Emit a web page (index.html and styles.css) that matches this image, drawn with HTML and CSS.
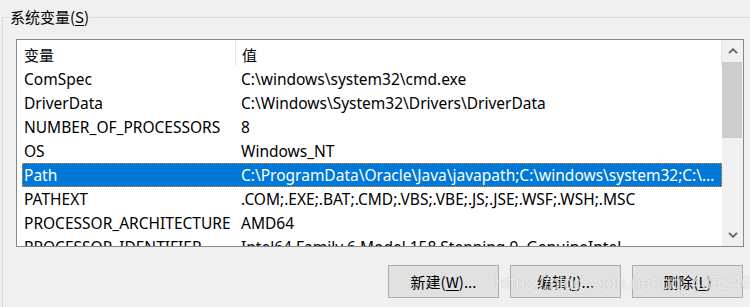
FILE: index.html
```html
<!DOCTYPE html>
<html>
<head>
  <meta charset="utf-8">
  <link rel="stylesheet" href="styles.css">
</head>
<body>
  <fieldset class="group">
    <legend class="group-title">系统变量(<u>S</u>)</legend>

    <div class="listbox">
      <div class="list">
        <div class="list-header">
          <div class="col col-name">变量</div>
          <div class="col col-value">值</div>
        </div>
        <div class="row"><div class="col col-name">ComSpec</div><div class="col col-value">C:\windows\system32\cmd.exe</div></div>
        <div class="row"><div class="col col-name">DriverData</div><div class="col col-value">C:\Windows\System32\Drivers\DriverData</div></div>
        <div class="row"><div class="col col-name">NUMBER_OF_PROCESSORS</div><div class="col col-value">8</div></div>
        <div class="row"><div class="col col-name">OS</div><div class="col col-value">Windows_NT</div></div>
        <div class="row row-selected"><div class="col col-name">Path</div><div class="col col-value">C:\ProgramData\Oracle\Java\javapath;C:\windows\system32;C:\windows;C:\windows\System32\Wbem</div></div>
        <div class="row"><div class="col col-name">PATHEXT</div><div class="col col-value">.COM;.EXE;.BAT;.CMD;.VBS;.VBE;.JS;.JSE;.WSF;.WSH;.MSC</div></div>
        <div class="row"><div class="col col-name">PROCESSOR_ARCHITECTURE</div><div class="col col-value">AMD64</div></div>
        <div class="row"><div class="col col-name">PROCESSOR_IDENTIFIER</div><div class="col col-value">Intel64 Family 6 Model 158 Stepping 9, GenuineIntel</div></div>
      </div>
      <div class="scrollbar">
        <div class="scroll-btn">
          <svg width="10" height="6" viewBox="0 0 10 6"><path d="M1 5.2 L5 1.2 L9 5.2" fill="none" stroke="#606060" stroke-width="1.8"/></svg>
        </div>
        <div class="scroll-track">
          <div class="scroll-thumb"></div>
        </div>
        <div class="scroll-btn">
          <svg width="10" height="6" viewBox="0 0 10 6"><path d="M1 0.8 L5 4.8 L9 0.8" fill="none" stroke="#606060" stroke-width="1.8"/></svg>
        </div>
      </div>
    </div>

    <div class="buttons">
      <button class="btn">新建(<u>W</u>)...</button>
      <button class="btn">编辑(<u>I</u>)...</button>
      <button class="btn">删除(<u>L</u>)</button>
    </div>
  </fieldset>

  <div class="watermark">https://blog.csdn.net/qq_43524679</div>
</body>
</html>
```

FILE: styles.css
```css
body {
  margin: 0;
  width: 750px;
  height: 307px;
  overflow: hidden;
  background: #f0f0f0;
  font-family: 'Noto Sans', 'Noto Sans CJK SC', sans-serif;
  font-size: 15.5px;
  color: #000;
  position: relative;
}

.group {
  box-sizing: border-box;
  min-width: 0;
  height: 301px;
  margin: 6px 0 0 2px;
  padding: 11px 6px 0 6px;
  border: 1px solid #dcdcdc;
  border-right: none;
  border-bottom: none;
}

.group-title {
  padding: 0 1px;
  line-height: 22px;
  font-size: 15px;
  font-family: 'Noto Sans CJK SC', sans-serif;
}

.group-title u,
.btn u {
  text-underline-offset: 2px;
}

.listbox {
  margin-left: 7px;
  height: 206px;
  border: 1px solid #828790;
  background: #fff;
  display: flex;
  overflow: hidden;
}

.list {
  flex: 1;
  min-width: 0;
  overflow: hidden;
}

.list-header {
  display: flex;
  height: 27px;
  margin-left: 5px;
  font-family: 'Noto Sans CJK SC', sans-serif;
  font-size: 15px;
}

.list-header .col {
  border-right: 1px solid #e5e5e5;
  margin: 1px 0;
  line-height: 27px;
}

.row {
  display: flex;
  height: 24px;
  line-height: 25px;
  margin-left: 5px;
}

.col {
  white-space: nowrap;
  overflow: hidden;
  text-overflow: ellipsis;
}

.col-name {
  width: 211px;
  padding-left: 2px;
  flex: none;
}

.col-value {
  flex: 1;
  min-width: 0;
  padding: 0 6px 0 6px;
}

.row-selected {
  background: #0078d7;
  color: #fff;
  outline: 1px dotted #f08a24;
  outline-offset: -1px;
}

.scrollbar {
  width: 21px;
  flex: none;
  background: #f0f0f0;
  display: flex;
  flex-direction: column;
}

.scroll-btn {
  height: 22px;
  display: flex;
  align-items: center;
  justify-content: center;
}

.scroll-track {
  flex: 1;
}

.scroll-thumb {
  height: 76px;
  margin: 0 1px 0 0;
  background: #cdcdcd;
}

.buttons {
  display: flex;
  justify-content: flex-end;
  gap: 11px;
  margin-top: 18px;
  margin-right: 1px;
}

.btn {
  width: 111px;
  height: 33px;
  padding: 0;
  background: #e1e1e1;
  border: 1px solid #adadad;
  border-radius: 0;
  font-family: 'Noto Sans CJK SC', sans-serif;
  font-size: 15px;
  color: #000;
}

.watermark {
  position: absolute;
  left: 495px;
  top: 273px;
  font-family: 'Liberation Sans', sans-serif;
  font-size: 18px;
  color: rgba(255, 255, 255, 0.75);
  text-shadow: 0 0 1px rgba(0, 0, 0, 0.25);
}
```
